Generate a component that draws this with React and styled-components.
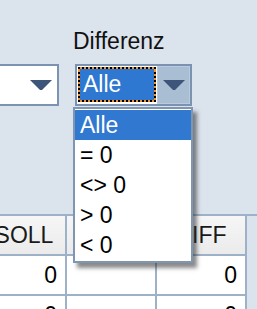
import React from "react";
import styled, { createGlobalStyle } from "styled-components";

const Global = createGlobalStyle`
  html, body { margin: 0; padding: 0; }
  body {
    background: #dbe3ec;
    font-family: "Liberation Sans", Arial, sans-serif;
    font-size: 23px;
    color: #000;
  }
`;

const Page = styled.div`
  width: 257px;
  height: 309px;
  overflow: hidden;
  background: #dbe3ec;
`;

const FilterBar = styled.div`
  height: 214px;
  display: flex;
  align-items: flex-start;
  gap: 16px;
  padding-top: 26px;
  box-sizing: border-box;
`;

const FilterGroup = styled.div`
  position: relative;
  display: flex;
  flex-direction: column;
  width: ${(p) => p.$width}px;
  margin-left: ${(p) => p.$offset || 0}px;
`;

const Label = styled.div`
  height: 30px;
  line-height: 30px;
  margin-left: -2px;
  margin-bottom: 8px;
  white-space: nowrap;
  color: #111;
`;

const Combo = styled.div`
  display: flex;
  align-items: stretch;
  height: 42px;
  box-sizing: border-box;
  border: 2px solid #7b93b0;
  background: #fff;
`;

const ComboValue = styled.div`
  flex: 1;
  display: flex;
  align-items: center;
  padding: 1px 0 2px 1px;
`;

const Selection = styled.div`
  flex: 1;
  height: 35px;
  box-sizing: border-box;
  border: 2px dotted #000;
  background: linear-gradient(#2f78d1, #2f78d1) padding-box, #f5922e border-box;
  color: #fff;
  line-height: 31px;
  padding-left: 3px;
`;

const ComboButton = styled.div`
  width: 33px;
  display: flex;
  align-items: center;
  justify-content: center;
  background: ${(p) => (p.$active ? "#a9bdd3" : "#fff")};
  box-shadow: ${(p) => (p.$active ? "inset 0 0 0 1px #bccbdc" : "none")};
  margin-left: 1px;
`;

const Arrow = () => (
  <svg width="22" height="11" viewBox="0 0 22 11">
    <polygon points="0,0 22,0 12,10 10,10" fill="#3d5578" />
  </svg>
);

const DropList = styled.ul`
  position: absolute;
  top: calc(100% + 1px);
  left: -2px;
  width: 120px;
  margin: 0;
  padding: 1px 0 1px;
  list-style: none;
  box-sizing: border-box;
  background: #fff;
  border: 2px solid #7f96b2;
  box-shadow: 4px 5px 4px rgba(40, 40, 40, 0.55);
  z-index: 5;
`;

const DropItem = styled.li`
  height: 30px;
  line-height: 30px;
  padding-left: 5px;
  white-space: pre;
  background: ${(p) => (p.$selected ? "#3178d0" : "transparent")};
  color: ${(p) => (p.$selected ? "#fff" : "#000")};
`;

const TableWrap = styled.div`
  border-top: 2px solid #9db2c8;
`;

const Table = styled.div`
  display: grid;
  grid-template-columns: 84px 90px 90px;
  margin-left: -17px;
  width: 264px;
`;

const HeadCell = styled.div`
  height: 38px;
  line-height: 38px;
  text-align: center;
  background: linear-gradient(#f6f6f6, #ebebeb);
  border-right: 2px solid #9db2c8;
  border-bottom: 2px solid #9db2c8;
  color: #1a1a1a;
  overflow: hidden;
`;

const Cell = styled.div`
  height: 38px;
  line-height: 38px;
  text-align: right;
  padding-right: 8px;
  background: #fff;
  border-right: 2px solid #9db2c8;
  border-bottom: 2px solid #9db2c8;
`;

const options = ["Alle", "= 0", "<> 0", "> 0", "< 0"];

export default function App() {
  return (
    <Page>
      <Global />
      <FilterBar>
        <FilterGroup $width={120} $offset={-61}>
          <Label>&nbsp;</Label>
          <Combo>
            <ComboValue />
            <ComboButton>
              <Arrow />
            </ComboButton>
          </Combo>
        </FilterGroup>
        <FilterGroup $width={117}>
          <Label>Differenz</Label>
          <Combo>
            <ComboValue>
              <Selection>Alle</Selection>
            </ComboValue>
            <ComboButton $active>
              <Arrow />
            </ComboButton>
          </Combo>
          <DropList>
            {options.map((o, i) => (
              <DropItem key={o} $selected={i === 0}>
                {o}
              </DropItem>
            ))}
          </DropList>
        </FilterGroup>
      </FilterBar>
      <TableWrap>
        <Table>
          <HeadCell>SOLL</HeadCell>
          <HeadCell></HeadCell>
          <HeadCell>DIFF</HeadCell>
          <Cell>0</Cell>
          <Cell></Cell>
          <Cell>0</Cell>
          <Cell>0</Cell>
          <Cell></Cell>
          <Cell>0</Cell>
        </Table>
      </TableWrap>
    </Page>
  );
}
